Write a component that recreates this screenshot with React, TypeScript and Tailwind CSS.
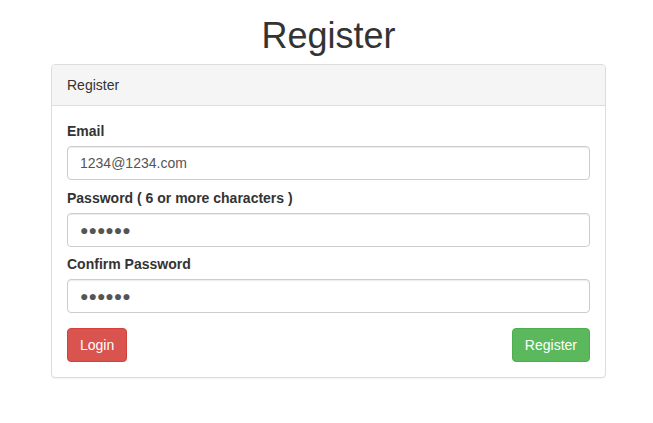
const Field = ({ label, value, gap }: { label: string; value: string; gap: string }) => (
  <div className={gap}>
    <label className="block mb-[5px] text-[14px] leading-[20px] font-bold text-[#333]">{label}</label>
    <input
      type="text"
      readOnly
      value={value}
      className="block w-full h-[34px] px-[12px] py-[6px] text-[14px] leading-[20px] text-[#555] bg-white border border-[#ccc] rounded-[4px] shadow-[inset_0_1px_1px_rgba(0,0,0,0.075)] outline-none"
    />
  </div>
);

export default function App() {
  return (
    <div className="min-h-[423px] bg-white font-['Liberation_Sans',Arial,sans-serif] text-[#333] text-[14px]">
      <div className="ml-[51px] w-[555px] pt-[16px]">
        <h1 className="text-center text-[36px] leading-[1.1] font-normal mb-[8px]">Register</h1>
        <div className="border border-[#ddd] rounded-[4px] bg-white shadow-[0_1px_1px_rgba(0,0,0,0.05)]">
          <div className="bg-[#f5f5f5] border-b border-[#ddd] rounded-t-[3px] px-[15px] py-[10px] leading-[20px]">
            Register
          </div>
          <div className="p-[15px]">
            <Field gap="mb-[8px]" label="Email" value="1234@1234.com" />
            <Field gap="mb-[7px]" label="Password ( 6 or more characters )" value="●●●●●●" />
            <Field gap="mb-[8px]" label="Confirm Password" value="●●●●●●" />
            <div className="flex justify-between pt-[7px]">
              <button className="h-[34px] px-[12px] text-[14px] leading-[20px] text-white bg-[#d9534f] border border-[#d43f3a] rounded-[4px]">
                Login
              </button>
              <button className="h-[34px] px-[12px] text-[14px] leading-[20px] text-white bg-[#5cb85c] border border-[#4cae4c] rounded-[4px]">
                Register
              </button>
            </div>
          </div>
        </div>
      </div>
    </div>
  );
}
